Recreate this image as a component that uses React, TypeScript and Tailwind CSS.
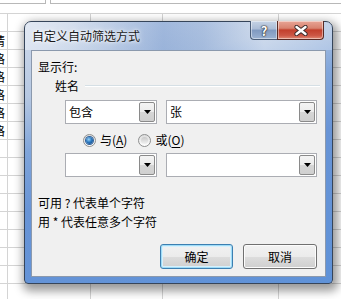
import React from "react"

const FONT = "font-['Noto_Sans_CJK_SC','Noto_Sans',sans-serif]"

const firstCol = ["", "请", "格", "格", "格", "格", "格", "", "", "", "", "", "", "", "", ""]

function SheetRow({ index }: { index: number }) {
  const left = firstCol[index] ?? ""
  return (
    <div className="flex h-[18px] border-b border-[#d4d4d4] text-[12px] leading-[17px] text-black">
      <div className="flex w-[8px] shrink-0 justify-end overflow-hidden border-r border-[#d4d4d4]">
        <span className="shrink-0 pr-[2px]">{left}</span>
      </div>
      <div className="w-[83px] shrink-0 border-r border-[#d4d4d4]" />
      <div className="w-[72px] shrink-0 border-r border-[#d4d4d4]" />
      <div className="w-[116px] shrink-0 border-r border-[#d4d4d4]" />
      <div className="flex-1" />
    </div>
  )
}

function DropArrow() {
  return (
    <div className="flex w-[16px] shrink-0 items-center justify-center rounded-[2px] border border-[#8a8a8a] bg-[linear-gradient(180deg,#f4f4f4_0%,#ebebeb_50%,#d6d6d6_51%,#cfcfcf_100%)]">
      <svg width="7" height="4" viewBox="0 0 7 4">
        <path d="M0 0H7L3.5 4Z" fill="#000" />
      </svg>
    </div>
  )
}

function Combo({ value, width }: { value: string; width: string }) {
  return (
    <div className={`flex h-[24px] shrink-0 border border-[#abadb3] bg-white p-[1px] ${width}`}>
      <div className="flex-1 pl-[2px] text-[12px] leading-[20px] text-black">{value}</div>
      <DropArrow />
    </div>
  )
}

function Radio({ checked }: { checked?: boolean }) {
  return (
    <div className="flex h-[13px] w-[13px] shrink-0 items-center justify-center rounded-full border border-[#8e8f8f] bg-[linear-gradient(180deg,#dcdcdc,#ffffff)]">
      {checked ? (
        <div className="h-[7px] w-[7px] rounded-full bg-[radial-gradient(circle_at_40%_35%,#9ad4f7_0%,#2a78c0_45%,#0c3c78_100%)] shadow-[0_0_0_1px_#30619b]" />
      ) : (
        <div className="h-[7px] w-[7px] rounded-full bg-[linear-gradient(180deg,#c9c9c9,#f1f1f1)]" />
      )}
    </div>
  )
}

function Button({ label, primary }: { label: string; primary?: boolean }) {
  return (
    <div
      className={
        "flex h-[25px] items-center justify-center rounded-[3px] border text-[12px] text-black bg-[linear-gradient(180deg,#f2f2f2_0%,#ebebeb_50%,#dddddd_51%,#cfcfcf_100%)] " +
        (primary
          ? "w-[73px] border-[#3c7fb1] shadow-[inset_0_0_0_1px_#9fdcf7,inset_0_0_0_2px_#d7f0fc]"
          : "w-[74px] border-[#707070] shadow-[inset_0_0_0_1px_#fcfcfc]")
      }
    >
      {label}
    </div>
  )
}

export default function App() {
  return (
    <div className={`relative h-[299px] w-[341px] overflow-hidden bg-white ${FONT}`}>
      {/* sheet behind the dialog */}
      <div className="flex h-[4px]">
        <div className="w-[46px] border-b border-r border-[#b8b8b8]" />
        <div className="w-[4px]" />
        <div className="flex-1 border-b border-l border-[#b8b8b8]" />
      </div>
      <div className="h-[10px] border-b border-[#d4d4d4]" />
      {firstCol.map((_, i) => (
        <SheetRow key={i} index={i} />
      ))}

      {/* dialog */}
      <div className="absolute left-[24px] top-[21px] flex h-[263px] w-[309px] flex-col rounded-t-[7px] rounded-b-[4px] border border-[#36455a] bg-[linear-gradient(165deg,#cfdaeb_0%,#b6c8e2_22%,#80a5da_38%,#6894d6_55%,#5f92d8_100%)] shadow-[2px_4px_10px_3px_rgba(0,0,0,0.4)]">
        <div className="relative flex h-[28px] shrink-0 items-start rounded-t-[6px] bg-[linear-gradient(90deg,rgba(255,255,255,0.4)_0%,rgba(255,255,255,0.2)_15%,rgba(60,110,190,0.25)_45%,rgba(60,110,190,0.15)_58%,rgba(255,255,255,0.35)_78%,rgba(255,255,255,0.25)_100%)]">
          <div className="flex h-[27px] flex-1 items-center pl-[7px] text-[12px] text-[#1a1a1a] [text-shadow:0_0_6px_#fff,0_0_3px_#fff]">
            自定义自动筛选方式
          </div>
          <div className="mr-[8px] mt-[-1px] flex h-[19px]">
            <div className="flex w-[27px] items-center justify-center rounded-bl-[4px] border border-t-0 border-r-0 border-[#4a5d78] bg-[linear-gradient(180deg,#c6d3e5_0%,#aabcd6_45%,#7f99c0_50%,#9bb2d2_100%)] shadow-[inset_0_0_0_1px_rgba(255,255,255,0.45)]">
              <span className="text-[13px] font-bold leading-none text-white [text-shadow:0_0_1px_#222,0_0_1px_#222,0_0_2px_#333]">?</span>
            </div>
            <div className="flex w-[47px] items-center justify-center rounded-br-[4px] border border-t-0 border-[#5a2a24] bg-[linear-gradient(180deg,#e8a596_0%,#d8826f_40%,#c23f2c_50%,#cc5645_80%,#e08a74_100%)] shadow-[inset_0_0_0_1px_rgba(255,255,255,0.45)]">
              <svg width="14" height="11" viewBox="0 0 14 11">
                <path d="M2.5 2L11.5 9M11.5 2L2.5 9" stroke="#3a2a2a" strokeWidth="4.2" strokeLinecap="round" />
                <path d="M2.5 2L11.5 9M11.5 2L2.5 9" stroke="#fff" strokeWidth="2.4" strokeLinecap="round" />
              </svg>
            </div>
          </div>
        </div>

        <div className="mx-[6px] flex h-[227px] flex-col border border-[#8b99ad] bg-[#f0f0f0] text-[12px] leading-[16px] text-black">
          <div className="pl-[6px] pt-[8px]">显示行:</div>
          <div className="mt-[3px] flex items-center pl-[23px] pr-[5px]">
            <span>姓名</span>
            <div className="ml-[6px] h-[2px] flex-1 border-t border-b border-t-[#d5dfe5] border-b-white" />
          </div>

          <div className="mt-[6px] flex gap-[9px] pl-[33px]">
            <Combo value="包含" width="w-[92px]" />
            <Combo value="张" width="w-[151px]" />
          </div>

          <div className="mt-[8px] flex h-[16px] items-center pl-[51px]">
            <Radio checked />
            <span className="ml-[4px]">
              与(<span className="underline underline-offset-2">A</span>)
            </span>
            <div className="ml-[11px]">
              <Radio />
            </div>
            <span className="ml-[4px]">
              或(<span className="underline underline-offset-2">O</span>)
            </span>
          </div>

          <div className="mt-[5px] flex gap-[9px] pl-[33px]">
            <Combo value="" width="w-[92px]" />
            <Combo value="" width="w-[151px]" />
          </div>

          <div className="mt-[18px] pl-[6px]">可用 ? 代表单个字符</div>
          <div className="mt-[3px] pl-[6px]">用 * 代表任意多个字符</div>

          <div className="mt-[14px] flex justify-end gap-[10px] pr-[8px]">
            <Button label="确定" primary />
            <Button label="取消" />
          </div>
        </div>
      </div>
    </div>
  )
}
